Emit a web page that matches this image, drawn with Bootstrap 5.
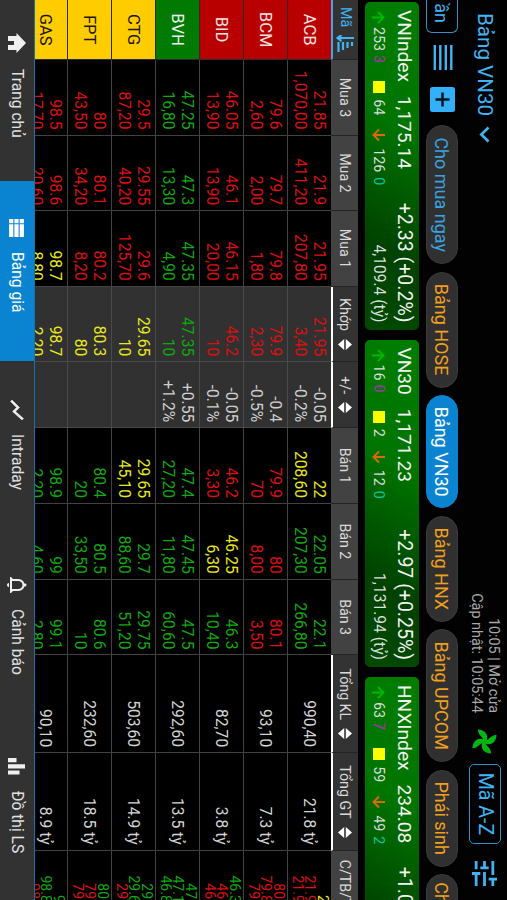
<!DOCTYPE html>
<html lang="vi">
<head>
<meta charset="utf-8">
<meta name="viewport" content="width=device-width, initial-scale=1">
<title>Bảng giá VN30</title>
<link href="https://cdn.jsdelivr.net/npm/bootstrap@5.3.0/dist/css/bootstrap.min.css" rel="stylesheet">
<style>
  html, body { width: 507px; height: 900px; margin: 0; overflow: hidden; background: #020202; }
  body { font-family: Roboto, "Noto Sans", sans-serif; }
  svg { display: block; flex: none; }
  /* landscape board turned a quarter clockwise */
  .board { width: 900px; height: 507px; transform-origin: 0 0; transform: rotate(90deg) translateY(-507px); overflow: hidden; color: #e6e6e6; white-space: nowrap; }
  .sky { color: #41b4f4; }
  .topline { height: 44px; padding: 0 14px 0 13px; }
  .title { font-size: 20.6px; line-height: 24px; }
  .clock { font-size: 14.4px; line-height: 17px; color: #a9a9a9; }
  .az { width: 80px; height: 32px; border: 1.5px solid #2f8fc8; border-radius: 5px; font-size: 19.6px; line-height: 29px; }
  .chips { height: 33px; margin-top: 4px; gap: 7.4px; }
  .chip { height: 32px; border-radius: 16px; background: #303030; color: #f0a01c; font-size: 18px; line-height: 31px; text-align: center; flex: none; border: 1px solid #3a3a3a; }
  .chip.on { background: #0a84d0; border-color: #0a84d0; color: #fff; }
  .chip.buy { color: #3ba2e0; }
  .chip.edge { background: none; border: 1.5px solid #2f8fc8; border-left: 0; border-radius: 0 6px 6px 0; color: #41b4f4; }
  .indices { margin: 7px 0 0 2px; gap: 10px; height: 54px; }
  .idx { flex: none; width: 327.5px; height: 54px; border-radius: 5px; padding: 2px 7px 0 8px; background: linear-gradient(122deg, #007e00 0%, #007400 38%, #004200 74%, #004a00 100%); }
  .idx .l1 { font-size: 19.1px; line-height: 25px; color: #f2f2f2; }
  .idx .l2 { font-size: 14.3px; line-height: 26px; color: #dcdcdc; }
  .chg { font-size: 19.5px; }
  .turn { font-size: 15.6px; }
  .sq { width: 12px; height: 12px; background: #ff0; margin: 0 6px 0 18px; }
  .ceil { color: #b02cb4; margin-left: 4px; }
  .floor { color: #00c8a0; margin-left: 5px; }
  .quotes { display: grid; grid-template-columns: 60.3px 75.3px 75.6px 75.6px 75.4px 66px 75.8px 75.8px 75.7px 97.7px 97.5px 66px; width: 937px; }
  .heads { height: 27px; margin-top: 7px; }
  .hd { background: #424242; border-right: 1px solid #242424; font-size: 14.2px; line-height: 27px; height: 27px; color: #dadada; gap: 8px; }
  .hd.sortable { background: #333; border-bottom: 2px solid #fff; line-height: 26px; }
  .hd.first { background: #333; border-bottom: 2px solid #3ba7e8; color: #41b4f4; }
  .rows { height: 296px; overflow: hidden; }
  .line { height: 44px; }
  .line > div { height: 44px; border-right: 1px solid #424242; border-bottom: 1px solid #424242; padding: 3px 5px 0 0; text-align: right; font-size: 15.6px; line-height: 19px; background: #000; }
  .line > .tick { font-size: 16.6px; line-height: 38px; text-align: center; padding-right: 0; border-color: #2a2a2a; }
  .line > .sum { line-height: 38px; color: #d4d4d4; }
  .line > .mid { background: #313131; border-color: #4a4a4a; }
  .line > .hl { font-size: 14px; line-height: 12.7px; padding-top: 2px; }
  .r { color: #dc0f12; } .g { color: #0fa80f; } .y { color: #e8e81c; } .w { color: #cfcfcf; }
  .line > .t-r { background: #b90000; color: #f4e4e4; } .line > .t-g { background: #007a00; color: #f0f0f0; } .line > .t-y { background: #fc0; color: #1c1600; }
  .tabs { height: 35px; border-top: 1.5px solid #1273ad; }
  .tabs > div { width: 180px; background: #323232; font-size: 15.6px; color: #e2e2e2; line-height: 33px; height: 34px; flex: none; }
  .tabs > .sel { background: #0a84d0; color: #fff; }
</style>
<script src="https://cdn.jsdelivr.net/npm/bootstrap@5.3.0/dist/js/bootstrap.bundle.min.js"></script>
</head>
<body>
<div class="board d-flex flex-column">
  <div class="topline d-flex align-items-center flex-shrink-0">
    <span class="title sky">Bảng VN30</span>
    <svg style="margin-left:10px" width="17" height="11" viewBox="0 0 17 11"><path d="M1.500 1.500 8.500 8.700 15.500 1.500" fill="none" stroke="#41b4f4" stroke-width="2.600"/></svg>
    <div class="clock text-end ms-auto">10:05 | Mở cửa<br>Cập nhật: 10:05:44</div>
    <svg style="margin-left:16px" width="25" height="25" viewBox="-12.500 -12.500 25 25" fill="#00b512">
      <path d="M-1 0C0-4-7-6-6.500-12-1-12 5-8 2 0z"/><path transform="rotate(90)" d="M-1 0C0-4-7-6-6.500-12-1-12 5-8 2 0z"/><path transform="rotate(180)" d="M-1 0C0-4-7-6-6.500-12-1-12 5-8 2 0z"/><path transform="rotate(270)" d="M-1 0C0-4-7-6-6.500-12-1-12 5-8 2 0z"/>
    </svg>
    <div class="az sky text-center" style="margin-left:10px">Mã A-Z</div>
    <svg style="margin-left:17px" width="25" height="25" viewBox="3 3 18 18" fill="#41b4f4"><path d="M3 17v2h6v-2H3zM3 5v2h10V5H3zm10 16v-2h8v-2h-8v-2h-2v6h2zM7 9v2H3v2h4v2h2V9H7zm14 4v-2H11v2h10zm-6-4h2V7h4V5h-4V3h-2v6z"/></svg>
  </div>

  <div class="chips d-flex align-items-center flex-shrink-0">
    <div class="chip edge text-end" style="width:33px;padding-right:9px">ần</div>
    <svg style="margin-left:5px" width="25" height="21" viewBox="0 0 25 21" fill="#41b4f4"><path d="M0 .5h25v2.400H0zM0 6h25v2.400H0zM0 11.500h25v2.400H0zM0 17h25v2.400H0z"/></svg>
    <svg style="margin:0 6px 0 9px" width="25" height="25" viewBox="0 0 25 25"><rect width="25" height="25" rx="2.500" fill="#33b0f8"/><path d="M12.500 5.500v14M5.500 12.500h14" stroke="#06131c" stroke-width="2.500"/></svg>
    <div class="chip buy" style="width:139px">Cho mua ngay</div>
    <div class="chip" style="width:116px">Bảng HOSE</div>
    <div class="chip on" style="width:113.500px">Bảng VN30</div>
    <div class="chip" style="width:106px">Bảng HNX</div>
    <div class="chip" style="width:133px">Bảng UPCOM</div>
    <div class="chip" style="width:97px">Phái sinh</div>
    <div class="chip" style="width:122px">Chứng quyền</div>
  </div>

  <div class="indices d-flex flex-shrink-0" id="indices"></div>
  <div class="quotes heads flex-shrink-0" id="heads"></div>
  <div class="rows flex-shrink-0" id="rows"></div>

  <div class="tabs d-flex flex-shrink-0">
    <div class="d-flex align-items-center" style="padding-left:33px;width:181px">
      <svg width="20" height="18" viewBox="0 0 20 18" fill="#f0f0f0"><path d="M10 0 20 9.500h-3V18h-5v-6H8v6H3V9.500H0z"/></svg>
      <span style="margin-left:16px">Trang chủ</span>
    </div>
    <div class="sel d-flex align-items-center" style="padding-left:38px">
      <svg width="18" height="15" viewBox="4 5 17 14" fill="#fff"><path d="M4 14h4v-4H4v4zm0 5h4v-4H4v4zM4 9h4V5H4v4zm5 5h12v-4H9v4zm0 5h12v-4H9v4zM9 5v4h12V5H9z"/></svg>
      <span style="margin-left:15px">Bảng giá</span>
    </div>
    <div class="d-flex align-items-center" style="padding-left:37px">
      <svg width="24" height="24" viewBox="0 0 24 24" fill="#f0f0f0" stroke="#f0f0f0" stroke-width=".5"><path d="m3.500 18.490 6-6.010 4 4L22 6.920l-1.410-1.410-7.090 7.970-4-4L2 16.990z"/></svg>
      <span style="margin-left:12px">Intraday</span>
    </div>
    <div class="d-flex align-items-center" style="padding-left:32px">
      <svg width="24" height="24" viewBox="0 0 24 24" fill="#f0f0f0"><path d="M12 22c1.100 0 2-.9 2-2h-4c0 1.100.9 2 2 2zm6-6v-5c0-3.070-1.630-5.640-4.500-6.320V4c0-.83-.67-1.500-1.500-1.500s-1.500.67-1.500 1.500v.68C7.640 5.360 6 7.920 6 11v5l-2 2v1h16v-1l-2-2zm-2 1H8v-6c0-2.480 1.510-4.500 4-4.500s4 2.020 4 4.500v6z"/></svg>
      <span style="margin-left:12px">Cảnh báo</span>
    </div>
    <div class="d-flex align-items-center" style="padding-left:37px">
      <svg width="17" height="17" viewBox="0 0 17 17" fill="#f0f0f0"><path d="M0 8.500h4.200V17H0zM6.200 0h4.200v17H6.200zM12.400 5.500h4.200V17h-4.200z"/></svg>
      <span style="margin-left:16px">Đồ thị LS</span>
    </div>
  </div>
</div>

<script>
  const upArrow = '<svg style="margin-left:1px" width="13" height="13" viewBox="0 0 13 13"><path d="M6.500 13V1.500M1 7l5.500-5.500L12 7" fill="none" stroke="#00b800" stroke-width="1.900"/></svg>';
  const downArrow = '<svg style="margin-left:13px" width="14" height="13" viewBox="0 0 14 13"><path d="M7 0v11.500M1.500 6 7 11.500 12.500 6" fill="none" stroke="#dc6a00" stroke-width="1.900"/></svg>';
  const indices = [
    ['VNIndex', '1,175.14', '+2.33 (+0.2%)', 253, 3, 64, 126, 0, '4,109.4 (tỷ)'],
    ['VN30', '1,171.23', '+2.97 (+0.25%)', 16, 0, 2, 12, 0, '1,131.94 (tỷ)'],
    ['HNXIndex', '234.08', '+1.01 (+0.43%)', 63, 7, 59, 49, 2, '433.96 (tỷ)']
  ];
  document.getElementById('indices').innerHTML = indices.map(i => `
    <div class="idx">
      <div class="l1 d-flex"><span>${i[0]}</span><span style="margin-left:14px">${i[1]}</span><span class="chg ms-auto">${i[2]}</span></div>
      <div class="l2 d-flex align-items-center">${upArrow}<span style="margin-left:3px">${i[3]}</span><span class="ceil">${i[4]}</span>
        <span class="sq"></span><span>${i[5]}</span>${downArrow}<span style="margin-left:6px">${i[6]}</span><span class="floor">${i[7]}</span><span class="turn ms-auto">${i[8]}</span></div>
    </div>`).join('');

  const sorter = '<svg width="11" height="14" viewBox="0 0 11 14" fill="#fff"><path d="M5.500 0 11 6.200H0zM5.500 14 0 7.800h11z"/></svg>';
  const sortIcon = '<svg width="17" height="18" viewBox="0 0 17 18" fill="none" stroke="#41b4f4" stroke-width="2.200"><path d="M3 0v16M0 12.500l3 4 3-4M7 15.500h10M7 11h8M7 6.500h6M7 2h4"/></svg>';
  const heads = ['Mã', 'Mua 3', 'Mua 2', 'Mua 1', 'Khớp', '+/-', 'Bán 1', 'Bán 2', 'Bán 3', 'Tổng KL', 'Tổng GT', 'C/TB/T'];
  document.getElementById('heads').innerHTML = heads.map((h, n) => {
    const sortable = [4, 5, 9, 10].includes(n);
    return `<div class="hd d-flex align-items-center justify-content-center ${n === 0 ? 'first' : sortable ? 'sortable' : ''}">${h}${n === 0 ? sortIcon : sortable ? sorter : ''}</div>`;
  }).join('');

  // per row: ticker, colour, then "colour price volume" for each step of the book
  const stocks = [
    ['ACB', 'r', 'r 21.85 1,070,00', 'r 21.9 411,20', 'r 21.95 207,80', 'r 21.95 3,40', 'w -0.05 -0.2%', 'y 22 208,60', 'g 22.05 207,30', 'g 22.1 266,80', '990,40', '21.8 tỷ', 'y 22 r 21.95 r 21.90'],
    ['BCM', 'r', 'r 79.6 2,60', 'r 79.7 2,00', 'r 79.8 1,80', 'r 79.9 2,30', 'w -0.4 -0.5%', 'r 79.9 70', 'r 80 8,00', 'r 80.1 3,50', '93,10', '7.3 tỷ', 'r 80.1 r 79.85 r 79.6'],
    ['BID', 'r', 'r 46.05 13,90', 'r 46.1 13,90', 'r 46.15 20,00', 'r 46.2 10', 'w -0.05 -0.1%', 'r 46.2 3,30', 'y 46.25 6,30', 'g 46.3 10,40', '82,70', '3.8 tỷ', 'g 46.35 r 46.2 r 46.1'],
    ['BVH', 'g', 'g 47.25 16,80', 'g 47.3 13,30', 'g 47.35 4,90', 'g 47.35 10', 'w +0.55 +1.2%', 'g 47.4 27,20', 'g 47.45 11,80', 'g 47.5 60,60', '292,60', '13.5 tỷ', 'g 47.4 g 47.15 g 46.85'],
    ['CTG', 'y', 'r 29.5 87,20', 'r 29.55 40,20', 'r 29.6 125,70', 'y 29.65 10', '', 'y 29.65 45,10', 'g 29.7 88,60', 'g 29.75 51,20', '503,60', '14.9 tỷ', 'g 29.8 g 29.66 r 29.5'],
    ['FPT', 'y', 'r 80 43,50', 'r 80.1 34,20', 'r 80.2 8,20', 'y 80.3 80', '', 'g 80.4 20', 'g 80.5 33,50', 'g 80.6 10', '232,60', '18.5 tỷ', 'g 80.4 r 79.9 r 79.5'],
    ['GAS', 'y', 'r 98.5 17,70', 'r 98.6 20,60', 'y 98.7 8,80', 'y 98.7 2,20', '', 'g 98.9 2,20', 'g 99 4,60', 'g 99.1 2,80', '90,10', '8.9 tỷ', 'g 99 g 98.85 r 98.2']
  ];
  document.getElementById('rows').innerHTML = stocks.map(s => {
    const book = s.slice(2, 10).map((c, n) => {
      const [k, p, v] = c.split(' ');
      return `<div class="${k} ${n === 3 || n === 4 ? 'mid' : ''}">${c ? p + '<br>' + v : ''}</div>`;
    }).join('');
    const h = s[12].split(' ');
    return `<div class="quotes line"><div class="tick t-${s[1]}">${s[0]}</div>${book}<div class="sum">${s[10]}</div><div class="sum">${s[11]}</div>
      <div class="hl"><span class="${h[0]}">${h[1]}</span><br><span class="${h[2]}">${h[3]}</span><br><span class="${h[4]}">${h[5]}</span></div></div>`;
  }).join('');
</script>
</body>
</html>
